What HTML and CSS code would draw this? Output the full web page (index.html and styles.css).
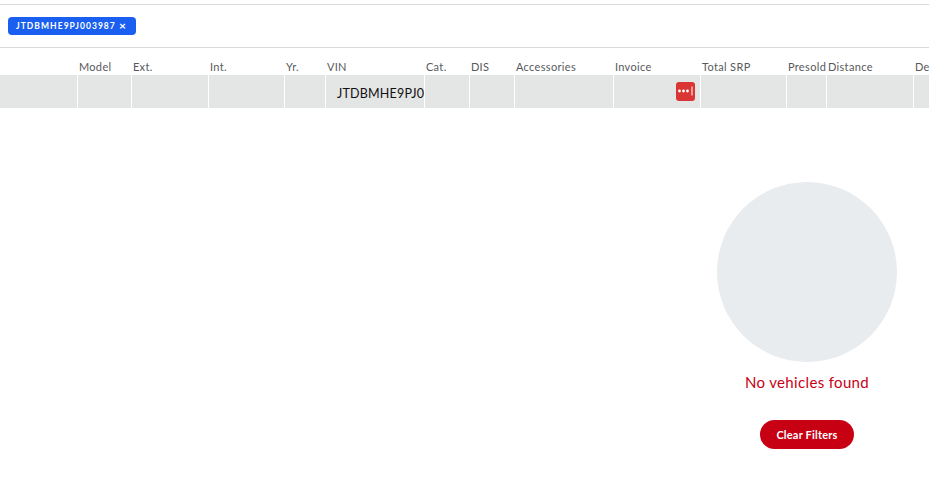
FILE: index.html
```html
<!DOCTYPE html>
<html lang="en">
<head>
<meta charset="utf-8">
<title>Vehicles</title>
<link rel="stylesheet" href="styles.css">
</head>
<body>
<div class="filters">
  <span class="chip">JTDBMHE9PJ003987 <span class="chip-x">×</span></span>
</div>
<div class="table">
  <div class="head">
    <div class="th"></div><div class="th">Model</div><div class="th">Ext.</div><div class="th">Int.</div><div class="th">Yr.</div><div class="th">VIN</div><div class="th">Cat.</div><div class="th">DIS</div><div class="th">Accessories</div><div class="th">Invoice</div><div class="th">Total SRP</div><div class="th">Presold</div><div class="th">Distance</div><div class="th">Dealer</div>
  </div>
  <div class="row">
    <div class="td"></div><div class="td"></div><div class="td"></div><div class="td"></div><div class="td"></div>
    <div class="td vin">JTDBMHE9PJ003987</div>
    <div class="td"></div><div class="td"></div><div class="td"></div>
    <div class="td invoice">
      <span class="pw-badge"><svg width="18" height="10" viewBox="0 0 18 10"><circle cx="2.5" cy="5" r="1.4" fill="#fff"/><circle cx="6.5" cy="5" r="1.4" fill="#fff"/><circle cx="10.5" cy="5" r="1.4" fill="#fff"/><rect x="14.5" y="0.5" width="1" height="9" fill="#fff"/></svg></span>
    </div>
    <div class="td"></div><div class="td"></div><div class="td"></div><div class="td"></div>
  </div>
</div>
<div class="empty">
  <div class="empty-panel">
    <div class="circle"></div>
    <p class="empty-text">No vehicles found</p>
    <button class="clear">Clear Filters</button>
  </div>
</div>
</body>
</html>
```
FILE: styles.css
```css
html, body { margin: 0; padding: 0; }
body {
  width: 929px;
  height: 502px;
  overflow: hidden;
  background: #fff;
  font-family: "Lato", "Liberation Sans", sans-serif;
  padding-top: 4px;
  box-sizing: border-box;
}
.filters {
  display: flex;
  align-items: flex-start;
  border-top: 1px solid #d9d9d9;
  border-bottom: 1px solid #d9d9d9;
  padding: 12px 0 0 8px;
  height: 30px;
}
.chip {
  display: flex;
  align-items: center;
  height: 18px;
  width: 128px;
  box-sizing: border-box;
  padding-left: 8px;
  background: #1a5ff0;
  border-radius: 4px;
  color: #fff;
  font-size: 8.5px;
  font-weight: 700;
  letter-spacing: 1.05px;
  white-space: pre;
}
.chip-x { font-size: 12px; line-height: 14px; letter-spacing: 0; font-weight: 700; }
.table { width: 929px; overflow: hidden; }
.head, .row {
  display: grid;
  grid-template-columns: 78px 54px 77px 76px 41px 99px 45px 45px 99px 87px 86px 40px 87px 60px;
  width: 974px;
}
.head { height: 27px; align-items: end; }
.th {
  font-size: 11px;
  line-height: 13px;
  color: #58595b;
  padding: 0 0 2px 0.9px;
  letter-spacing: 0.35px;
  white-space: nowrap;
}
.row { height: 33px; background: #e4e5e5; }
.td {
  border-right: 1px solid #fff;
  box-sizing: border-box;
  overflow: hidden;
  white-space: nowrap;
}
.vin {
  font-size: 12.5px;
  line-height: 33px;
  padding: 2px 0 0 11px;
  color: #111;
  letter-spacing: 0.2px;
}
.invoice { display: flex; justify-content: flex-end; align-items: center; padding: 0 5px 1px 0; }
.pw-badge {
  display: flex;
  align-items: center;
  justify-content: center;
  width: 19px;
  height: 19px;
  border-radius: 3px;
  background: #d93535;
}
.empty {
  display: flex;
  justify-content: flex-end;
  padding: 74px 32px 0 0;
}
.empty-panel {
  display: flex;
  flex-direction: column;
  align-items: center;
  width: 180px;
}
.circle {
  width: 180px;
  height: 180px;
  border-radius: 50%;
  background: #e9ecef;
  flex: none;
}
.empty-text {
  margin: 11px 0 0;
  font-size: 15px;
  line-height: 18px;
  color: #c70014;
  white-space: nowrap;
  letter-spacing: 0.35px;
}
.clear {
  margin-top: 29px;
  width: 94px;
  height: 29px;
  border: 0;
  border-radius: 15px;
  background: #c70014;
  color: #fff;
  font-family: inherit;
  font-size: 11px;
  font-weight: 700;
  letter-spacing: 0.2px;
  padding: 0;
}
```
